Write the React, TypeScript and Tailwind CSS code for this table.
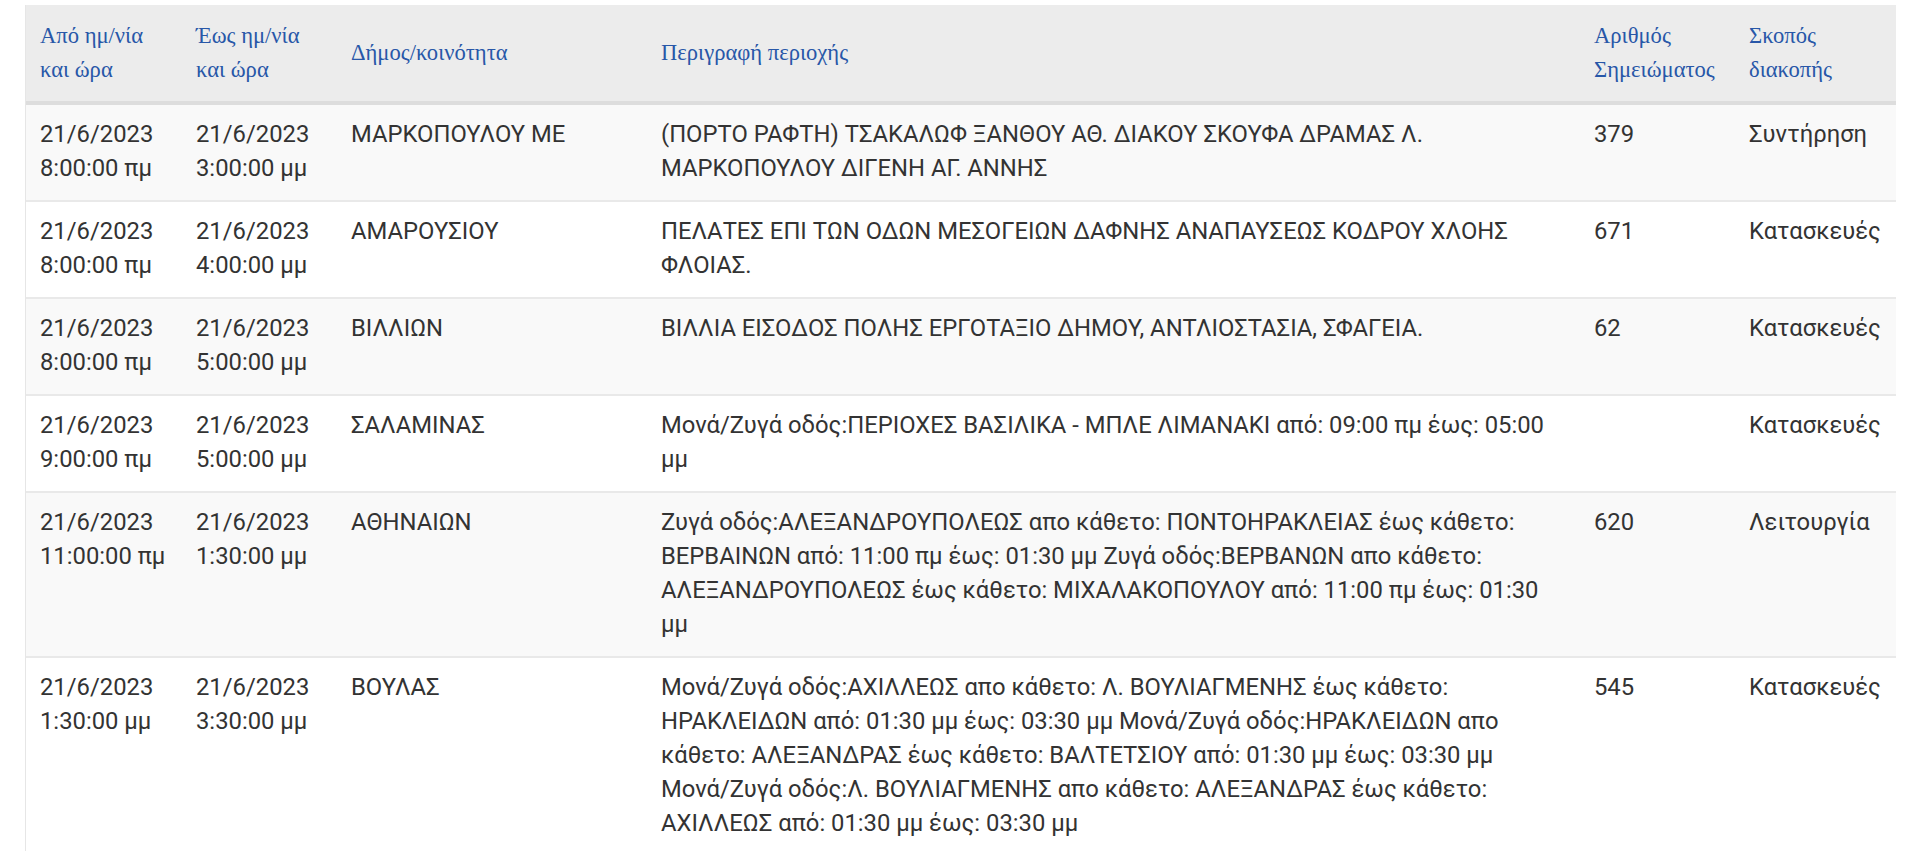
const columns = [
  { label: ["Από ημ/νία", "και ώρα"], width: "w-[156px]" },
  { label: ["Έως ημ/νία", "και ώρα"], width: "w-[155px]" },
  { label: ["Δήμος/κοινότητα"], width: "w-[310px]" },
  { label: ["Περιγραφή περιοχής"], width: "w-[933px]" },
  { label: ["Αριθμός", "Σημειώματος"], width: "w-[155px]" },
  { label: ["Σκοπός", "διακοπής"], width: "w-[161px]" },
];

const rows = [
  {
    from: ["21/6/2023", "8:00:00 πμ"],
    to: ["21/6/2023", "3:00:00 μμ"],
    municipality: "ΜΑΡΚΟΠΟΥΛΟΥ ΜΕ",
    area: "(ΠΟΡΤΟ ΡΑΦΤΗ) ΤΣΑΚΑΛΩΦ ΞΑΝΘΟΥ ΑΘ. ΔΙΑΚΟΥ ΣΚΟΥΦΑ ΔΡΑΜΑΣ Λ. ΜΑΡΚΟΠΟΥΛΟΥ ΔΙΓΕΝΗ ΑΓ. ΑΝΝΗΣ",
    note: "379",
    reason: "Συντήρηση",
  },
  {
    from: ["21/6/2023", "8:00:00 πμ"],
    to: ["21/6/2023", "4:00:00 μμ"],
    municipality: "ΑΜΑΡΟΥΣΙΟΥ",
    area: "ΠΕΛΑΤΕΣ ΕΠΙ ΤΩΝ ΟΔΩΝ ΜΕΣΟΓΕΙΩΝ ΔΑΦΝΗΣ ΑΝΑΠΑΥΣΕΩΣ ΚΟΔΡΟΥ ΧΛΟΗΣ ΦΛΟΙΑΣ.",
    note: "671",
    reason: "Κατασκευές",
  },
  {
    from: ["21/6/2023", "8:00:00 πμ"],
    to: ["21/6/2023", "5:00:00 μμ"],
    municipality: "ΒΙΛΛΙΩΝ",
    area: "ΒΙΛΛΙΑ ΕΙΣΟΔΟΣ ΠΟΛΗΣ ΕΡΓΟΤΑΞΙΟ ΔΗΜΟΥ, ΑΝΤΛΙΟΣΤΑΣΙΑ, ΣΦΑΓΕΙΑ.",
    note: "62",
    reason: "Κατασκευές",
  },
  {
    from: ["21/6/2023", "9:00:00 πμ"],
    to: ["21/6/2023", "5:00:00 μμ"],
    municipality: "ΣΑΛΑΜΙΝΑΣ",
    area: "Μονά/Ζυγά οδός:ΠΕΡΙΟΧΕΣ ΒΑΣΙΛΙΚΑ - ΜΠΛΕ ΛΙΜΑΝΑΚΙ από: 09:00 πμ έως: 05:00 μμ",
    note: "",
    reason: "Κατασκευές",
  },
  {
    from: ["21/6/2023", "11:00:00 πμ"],
    to: ["21/6/2023", "1:30:00 μμ"],
    municipality: "ΑΘΗΝΑΙΩΝ",
    area: "Ζυγά οδός:ΑΛΕΞΑΝΔΡΟΥΠΟΛΕΩΣ απο κάθετο: ΠΟΝΤΟΗΡΑΚΛΕΙΑΣ έως κάθετο: ΒΕΡΒΑΙΝΩΝ από: 11:00 πμ έως: 01:30 μμ Ζυγά οδός:ΒΕΡΒΑΝΩΝ απο κάθετο: ΑΛΕΞΑΝΔΡΟΥΠΟΛΕΩΣ έως κάθετο: ΜΙΧΑΛΑΚΟΠΟΥΛΟΥ από: 11:00 πμ έως: 01:30 μμ",
    note: "620",
    reason: "Λειτουργία",
  },
  {
    from: ["21/6/2023", "1:30:00 μμ"],
    to: ["21/6/2023", "3:30:00 μμ"],
    municipality: "ΒΟΥΛΑΣ",
    area: "Μονά/Ζυγά οδός:ΑΧΙΛΛΕΩΣ απο κάθετο: Λ. ΒΟΥΛΙΑΓΜΕΝΗΣ έως κάθετο: ΗΡΑΚΛΕΙΔΩΝ από: 01:30 μμ έως: 03:30 μμ Μονά/Ζυγά οδός:ΗΡΑΚΛΕΙΔΩΝ απο κάθετο: ΑΛΕΞΑΝΔΡΑΣ έως κάθετο: ΒΑΛΤΕΤΣΙΟΥ από: 01:30 μμ έως: 03:30 μμ Μονά/Ζυγά οδός:Λ. ΒΟΥΛΙΑΓΜΕΝΗΣ απο κάθετο: ΑΛΕΞΑΝΔΡΑΣ έως κάθετο: ΑΧΙΛΛΕΩΣ από: 01:30 μμ έως: 03:30 μμ",
    note: "545",
    reason: "Κατασκευές",
  },
];

function Stacked({ lines }: { lines: string[] }) {
  return (
    <>
      {lines.map((l) => (
        <span key={l} className="block whitespace-nowrap">
          {l}
        </span>
      ))}
    </>
  );
}

export default function App() {
  return (
    <div className="min-h-screen bg-white pt-[5px] pl-[25px] font-['Roboto','Noto_Sans',sans-serif]">
      <div className="w-[1870px] border-x border-[#e6e6e6]">
        <table className="w-full table-fixed border-collapse text-[23.8px] leading-[34px] text-[#333333]">
          <colgroup>
            {columns.map((c) => (
              <col key={c.label.join(" ")} className={c.width} />
            ))}
          </colgroup>
          <thead>
            <tr className="bg-[#ececec] border-b-4 border-[#dddddd]">
              {columns.map((c) => (
                <th
                  key={c.label.join(" ")}
                  className="px-[14px] py-[14px] text-left align-middle text-[22.6px] font-normal font-['Liberation_Serif',serif] text-[#2857a8]"
                >
                  <Stacked lines={c.label} />
                </th>
              ))}
            </tr>
          </thead>
          <tbody>
            {rows.map((r, i) => (
              <tr
                key={r.municipality}
                className={`${i % 2 === 0 ? "bg-[#f9f9f9]" : "bg-white"} ${i > 0 ? "border-t-2 border-[#e9e9e9]" : ""}`}
              >
                <td className="px-[14px] pt-[12px] pb-[15px] align-top">
                  <Stacked lines={r.from} />
                </td>
                <td className="px-[14px] pt-[12px] pb-[15px] align-top">
                  <Stacked lines={r.to} />
                </td>
                <td className="px-[14px] pt-[12px] pb-[15px] align-top">{r.municipality}</td>
                <td className="px-[14px] pt-[12px] pb-[15px] align-top">{r.area}</td>
                <td className="px-[14px] pt-[12px] pb-[15px] align-top">{r.note}</td>
                <td className="px-[14px] pt-[12px] pb-[15px] align-top">{r.reason}</td>
              </tr>
            ))}
          </tbody>
        </table>
      </div>
    </div>
  );
}
